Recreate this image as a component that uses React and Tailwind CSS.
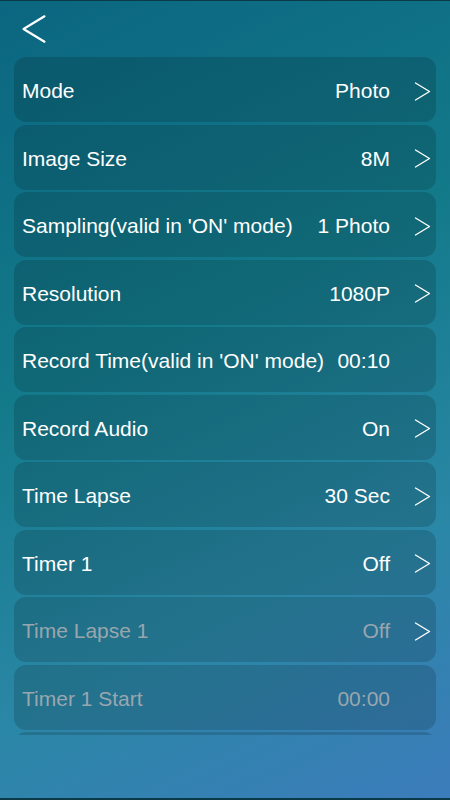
import React from "react";

const rows = [
  { label: "Mode", value: "Photo", arrow: true },
  { label: "Image Size", value: "8M", arrow: true },
  { label: "Sampling(valid in 'ON' mode)", value: "1 Photo", arrow: true },
  { label: "Resolution", value: "1080P", arrow: true },
  { label: "Record Time(valid in 'ON' mode)", value: "00:10", arrow: false },
  { label: "Record Audio", value: "On", arrow: true },
  { label: "Time Lapse", value: "30 Sec", arrow: true },
  { label: "Timer 1", value: "Off", arrow: true },
  { label: "Time Lapse 1", value: "Off", arrow: true, dim: true },
  { label: "Timer 1 Start", value: "00:00", arrow: false, dim: true },
  // next row only peeks in at the bottom of the list
  { label: "", value: "", arrow: false, dim: true },
];

function Chevron({ dir = "right", className }) {
  return (
    <svg viewBox="0 0 16 19" className={className} fill="none" stroke="white" strokeWidth="1.4" strokeLinecap="round" strokeLinejoin="round">
      {dir === "right" ? <path d="M1 1 L15 9.5 L1 18" /> : <path d="M15 1 L1 9.5 L15 18" />}
    </svg>
  );
}

function Row({ row }) {
  const txt = row.dim ? "text-[#9aa6ae]" : "text-white";
  return (
    <div className="h-[65px] mb-[2.5px] rounded-[12px] bg-black/15 flex items-center pl-[8px] pr-[5px] pt-[3px] shrink-0">
      <span className={`flex-1 whitespace-nowrap ${txt}`}>{row.label}</span>
      <span className={`whitespace-nowrap ${txt}`}>{row.value}</span>
      <div className="w-[41px] flex justify-end">
        {row.arrow && <Chevron className="w-[17px] h-[19px]" />}
      </div>
    </div>
  );
}

export default function App() {
  return (
    <div
      className="w-[450px] h-[800px] overflow-hidden flex flex-col border-t border-b-2 border-[#0a3a48] bg-[linear-gradient(155deg,#0b6680_0%,#137a8a_40%,#2a87a6_72%,#3c7cbb_100%)] text-[21px]"
      style={{ fontFamily: '"Liberation Sans", Arial, sans-serif' }}
    >
      <div className="h-[56px] shrink-0 pl-[22px] pt-[13px]">
        <Chevron dir="left" className="w-[24px] h-[30px]" />
      </div>
      <div className="h-[678px] overflow-hidden px-[14px] flex flex-col">
        {rows.map((r, i) => (
          <Row key={i} row={r} />
        ))}
      </div>
    </div>
  );
}
